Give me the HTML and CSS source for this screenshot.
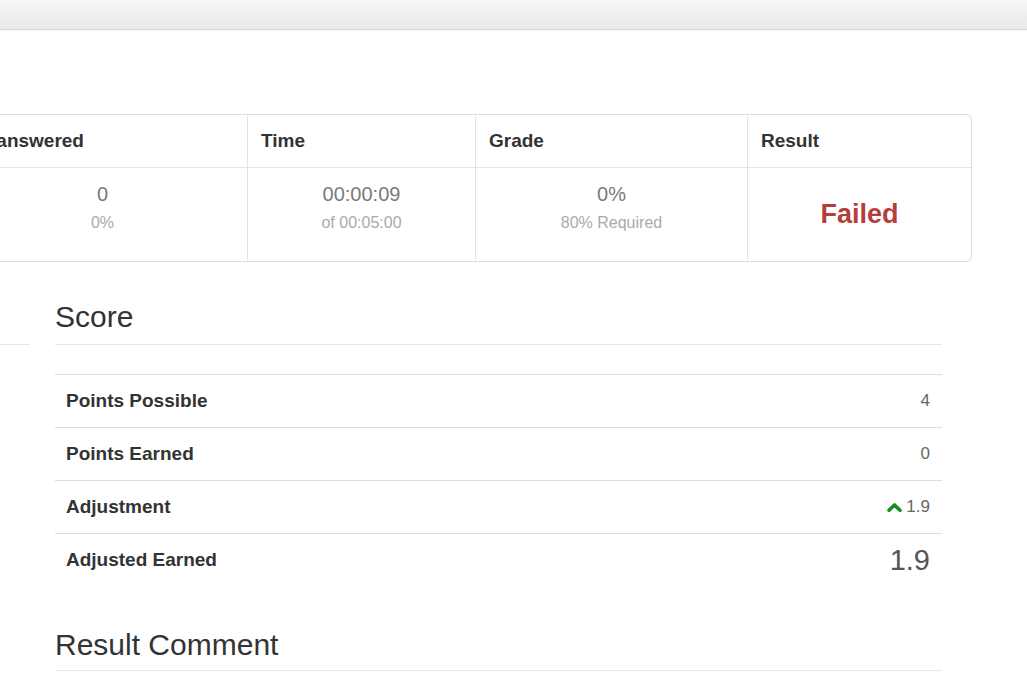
FILE: index.html
```html
<!DOCTYPE html>
<html lang="en">
<head>
<meta charset="utf-8">
<title>Quiz Result</title>
<link rel="stylesheet" href="styles.css">
</head>
<body>
    <div class="topbar"></div>

    <div class="page">
        <table class="summary">
            <tr>
                <th>Unanswered</th>
                <th>Time</th>
                <th>Grade</th>
                <th>Result</th>
            </tr>
            <tr>
                <td class="first">
                    <div class="val">0</div>
                    <div class="sub">0%</div>
                </td>
                <td>
                    <div class="val">00:00:09</div>
                    <div class="sub">of 00:05:00</div>
                </td>
                <td>
                    <div class="val">0%</div>
                    <div class="sub">80% Required</div>
                </td>
                <td class="result">Failed</td>
            </tr>
        </table>

        <div class="lower">
            <div class="side">
                <h3 class="title">&nbsp;</h3>
            </div>
            <div class="main">
                <h3 class="title">Score</h3>
                <table class="score">
                    <tr>
                        <th>Points Possible</th>
                        <td>4</td>
                    </tr>
                    <tr>
                        <th>Points Earned</th>
                        <td>0</td>
                    </tr>
                    <tr>
                        <th>Adjustment</th>
                        <td>
                            <svg class="up" width="15" height="10" viewBox="0 0 15 10"><polyline points="2,8.3 7.5,3 13,8.3" fill="none" stroke="#1c8a1c" stroke-width="3.6" stroke-linecap="round" stroke-linejoin="round"/></svg>1.9
                        </td>
                    </tr>
                    <tr>
                        <th>Adjusted Earned</th>
                        <td class="big">1.9</td>
                    </tr>
                </table>
                <h3 class="title comment">Result Comment</h3>
            </div>
        </div>
    </div>
</body>
</html>
```

FILE: styles.css
```css
*{margin:0;padding:0}
body{font-family:"Liberation Sans", Arial, sans-serif; color:#333; background:#fff; overflow:hidden;}

.topbar{height:29px; border-bottom:1px solid #d6d6d6; background:linear-gradient(#f6f6f6, #e9e9e9); box-shadow:0 1px 2px rgba(0,0,0,.05);}

.page{margin-left:-43px; width:1015px; padding-top:84px;}

/* summary box */
.summary{width:100%; border-collapse:separate; border-spacing:0; border:1px solid #dedede; border-radius:5px; table-layout:fixed;}
.summary th{height:52px; padding:0 13px; text-align:left; font-size:19px; font-weight:bold; color:#333; border-bottom:1px solid #e3e3e3; border-left:1px solid #e3e3e3;}
.summary th:first-child{width:263px; border-left:0;}
.summary th:nth-child(2){width:201px;}
.summary th:nth-child(3){width:245px;}
.summary td{height:79px; padding-top:14px; vertical-align:top; text-align:center; border-left:1px solid #e3e3e3;}
.summary td.first{border-left:0;}
.summary .val{font-size:20px; line-height:24px; color:#7a7a7a;}
.summary .sub{margin-top:7px; font-size:16px; line-height:20px; color:#aaa;}
.summary td.result{padding-top:0; vertical-align:middle; font-size:27px; font-weight:bold; color:#b63d3b;}

/* lower part */
.lower{display:grid; grid-template-columns:73px 887px; column-gap:25px; margin-top:38px;}
.title{font-size:30px; line-height:33px; font-weight:normal; color:#333; padding-bottom:11px; border-bottom:1px solid #e6e6e6;}
.title.comment{margin-top:42px; padding-bottom:9px;}

.score{width:100%; border-collapse:collapse; margin-top:29px; border-top:1px solid #dcdcdc;}
.score tr{border-bottom:1px solid #dcdcdc;}
.score tr:last-child{border-bottom:0;}
.score th{height:52px; padding:0 11px; text-align:left; font-size:19px; font-weight:bold; color:#333; vertical-align:middle;}
.score td{padding:0 12px; text-align:right; font-size:17px; color:#666; vertical-align:middle;}
.score td.big{font-size:29px; color:#555;}
.score .up{margin-right:4px; vertical-align:0;}
```
